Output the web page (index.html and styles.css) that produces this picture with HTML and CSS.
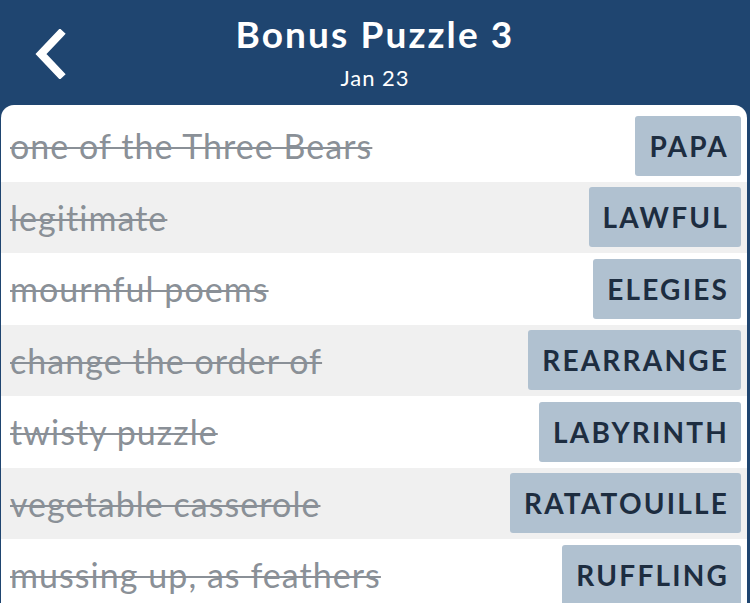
FILE: index.html
```html
<!DOCTYPE html>
<html lang="en">
<head>
  <meta charset="UTF-8" />
  <meta name="viewport" content="width=device-width, initial-scale=1.0"/>
  <title>Bonus Puzzle 3</title>
  <link rel="stylesheet" href="styles.css">
</head>
<body>
  <header class="topbar">
    <a class="back" href="#">
      <svg width="34" height="50" viewBox="0 0 34 50">
        <path d="M27 5 L8 25 L27 45" fill="none" stroke="#fff" stroke-width="8" stroke-linecap="square"/>
      </svg>
    </a>
    <h1>Bonus Puzzle 3</h1>
    <div class="date">Jan 23</div>
  </header>

  <!-- solved clues -->
  <div class="card">
    <div class="row"><span class="clue">one of the Three Bears</span><span class="answer">PAPA</span></div>
    <div class="row"><span class="clue">legitimate</span><span class="answer">LAWFUL</span></div>
    <div class="row"><span class="clue">mournful poems</span><span class="answer">ELEGIES</span></div>
    <div class="row"><span class="clue">change the order of</span><span class="answer">REARRANGE</span></div>
    <div class="row"><span class="clue">twisty puzzle</span><span class="answer">LABYRINTH</span></div>
    <div class="row"><span class="clue">vegetable casserole</span><span class="answer">RATATOUILLE</span></div>
    <div class="row"><span class="clue">mussing up, as feathers</span><span class="answer">RUFFLING</span></div>
  </div>
</body>
</html>
```

FILE: styles.css
```css
html, body {
  margin: 0;
  padding: 0;
  background-color: #1f4570;
  font-family: 'Lato', sans-serif;
  overflow: hidden;
  height: 603px;
}
.topbar {
  position: relative;
  height: 105px;
  text-align: center;
  color: white;
}
.topbar h1 {
  margin: 0;
  padding-top: 12px;
  font-size: 37px;
  font-weight: 700;
  line-height: 44px;
  letter-spacing: 2.1px;
}
.date {
  padding-top: 7px;
  font-size: 22px;
  line-height: 30px;
  letter-spacing: 1px;
}
.back {
  position: absolute;
  left: 33px;
  top: 29px;
}
.card {
  background: white;
  margin: 0 3px 0 1px;
  border-radius: 13px 13px 0 0;
  padding-top: 5px;
}
.row {
  height: 71.5px;
  display: flex;
  align-items: center;
  justify-content: space-between;
  padding: 0 6px 0 9px;
}
.row:nth-child(even) { background-color: #f0f0f0; }
.clue {
  font-size: 34px;
  letter-spacing: 1.05px;
  color: #8a9097;
  text-decoration: line-through;
  text-decoration-thickness: 2px;
}
.answer {
  background-color: #b0c1d0;
  color: #1d2d40;
  font-weight: 700;
  font-size: 28px;
  letter-spacing: 2.2px;
  height: 60px;
  line-height: 60px;
  padding: 0 12px 0 14px;
  border-radius: 3px;
}
```
